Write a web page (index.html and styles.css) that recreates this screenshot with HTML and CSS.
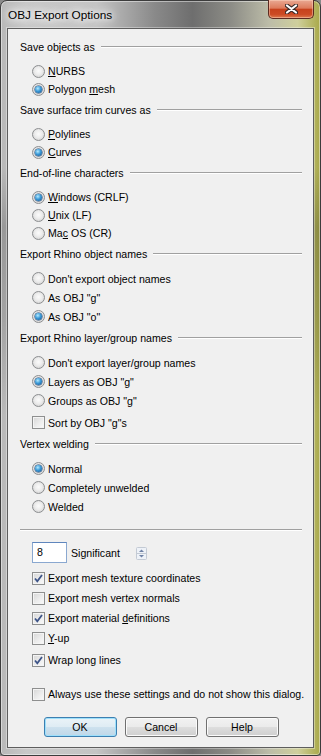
FILE: index.html
```html
<!DOCTYPE html>
<html>
<head>
    <link rel="stylesheet" href="styles.css">
</head>
<body>
    <div class="window">
        <div class="titlebar">
            <div class="title">OBJ Export Options</div>
            <div class="close">
                <svg width="13" height="10" viewBox="0 0 13 10">
                    <path d="M2 1.5 L11 8.5 M11 1.5 L2 8.5" stroke="#3a2a28" stroke-width="4.2" stroke-linecap="round"/>
                    <path d="M2 1.5 L11 8.5 M11 1.5 L2 8.5" stroke="#fff" stroke-width="2.2" stroke-linecap="round"/>
                </svg>
            </div>
        </div>

        <div class="client">
            <div class="group">
                <div class="group-title">Save objects as</div>
                <div class="options">
                    <div class="option"><span class="radio"></span><span><u>N</u>URBS</span></div>
                    <div class="option"><span class="radio on"></span><span>Polygon <u>m</u>esh</span></div>
                </div>
            </div>

            <div class="group">
                <div class="group-title">Save surface trim curves as</div>
                <div class="options">
                    <div class="option"><span class="radio"></span><span><u>P</u>olylines</span></div>
                    <div class="option"><span class="radio on"></span><span><u>C</u>urves</span></div>
                </div>
            </div>

            <div class="group">
                <div class="group-title">End-of-line characters</div>
                <div class="options">
                    <div class="option"><span class="radio on"></span><span><u>W</u>indows (CRLF)</span></div>
                    <div class="option"><span class="radio"></span><span><u>U</u>nix (LF)</span></div>
                    <div class="option"><span class="radio"></span><span>Ma<u>c</u> OS (CR)</span></div>
                </div>
            </div>

            <div class="group">
                <div class="group-title">Export Rhino object names</div>
                <div class="options tall">
                    <div class="option"><span class="radio"></span><span>Don't export object names</span></div>
                    <div class="option"><span class="radio"></span><span>As OBJ &quot;g&quot;</span></div>
                    <div class="option"><span class="radio on"></span><span>As OBJ &quot;o&quot;</span></div>
                </div>
            </div>

            <div class="group">
                <div class="group-title">Export Rhino layer/group names</div>
                <div class="options tall">
                    <div class="option"><span class="radio"></span><span>Don't export layer/group names</span></div>
                    <div class="option"><span class="radio on"></span><span>Layers as OBJ &quot;g&quot;</span></div>
                    <div class="option"><span class="radio"></span><span>Groups as OBJ &quot;g&quot;</span></div>
                    <div class="option sort"><span class="check"></span><span>Sort by OBJ &quot;g&quot;s</span></div>
                </div>
            </div>

            <div class="group">
                <div class="group-title">Vertex welding</div>
                <div class="options tall">
                    <div class="option"><span class="radio on"></span><span>Normal</span></div>
                    <div class="option"><span class="radio"></span><span>Completely unwelded</span></div>
                    <div class="option"><span class="radio"></span><span>Welded</span></div>
                </div>
            </div>

            <div class="separator"></div>

            <div class="number-row">
                <div class="num">8</div>
                <span class="num-label">Significant</span>
                <svg class="spinner" width="11" height="13" viewBox="0 0 11 13">
                    <rect x="0.5" y="0.5" width="10" height="12" rx="1" fill="#eef2f8" stroke="#c3cad4"/>
                    <line x1="1" y1="6.5" x2="10" y2="6.5" stroke="#c3cad4"/>
                    <path d="M3 5 L5.5 2.5 L8 5 Z" fill="#6f82a6"/>
                    <path d="M3 8 L5.5 10.5 L8 8 Z" fill="#6f82a6"/>
                </svg>
            </div>

            <div class="checks">
                <div class="check-row">
                    <span class="check"><svg width="11" height="11" viewBox="0 0 11 11"><path d="M2 5.5 L4.3 8.3 L9 2" fill="none" stroke="#3d5488" stroke-width="1.8"/></svg></span>
                    <span>Export mesh texture coordinates</span>
                </div>
                <div class="check-row">
                    <span class="check"></span>
                    <span>Export mesh vertex normals</span>
                </div>
                <div class="check-row">
                    <span class="check"><svg width="11" height="11" viewBox="0 0 11 11"><path d="M2 5.5 L4.3 8.3 L9 2" fill="none" stroke="#3d5488" stroke-width="1.8"/></svg></span>
                    <span>Export material <u>d</u>efinitions</span>
                </div>
                <div class="check-row">
                    <span class="check"></span>
                    <span><u>Y</u>-up</span>
                </div>
                <div class="check-row wrap">
                    <span class="check"><svg width="11" height="11" viewBox="0 0 11 11"><path d="M2 5.5 L4.3 8.3 L9 2" fill="none" stroke="#3d5488" stroke-width="1.8"/></svg></span>
                    <span>Wrap long lines</span>
                </div>
            </div>

            <div class="check-row always">
                <span class="check"></span>
                <span>Always use these settings and do not show this dialog.</span>
            </div>

            <div class="buttons">
                <button class="btn default">OK</button>
                <button class="btn">Cancel</button>
                <button class="btn">Help</button>
            </div>
        </div>
    </div>
</body>
</html>
```

FILE: styles.css
```css
* {
    box-sizing: border-box;
}

html, body {
    margin: 0;
    padding: 0;
}

body {
    width: 321px;
    height: 756px;
    overflow: hidden;
    background: #8a8a8a;
    font-family: "Liberation Sans", Arial, sans-serif;
    font-size: 10.6px;
    color: #000;
}

.window {
    width: 321px;
    height: 756px;
    display: flex;
    flex-direction: column;
    padding: 0 6px 7px 6px;
    border: 1px solid #3c3c3c;
    border-radius: 7px 7px 4px 4px;
    box-shadow: inset 0 0 0 1px rgba(255, 255, 255, 0.45);
    background:
        linear-gradient(180deg, rgba(0, 0, 0, 0) 0, rgba(0, 0, 0, 0) 22%, rgba(0, 0, 0, 0.18) 30%, rgba(0, 0, 0, 0.12) 42%, rgba(0, 0, 0, 0) 55%),
        linear-gradient(90deg, #b8b8b8 0%, #c8c8c8 8%, #c4c4c4 30%, #8a8a8a 48%, #6e6e6e 60%, #8c8c86 72%, #bcbca8 84%, #cfcf9c 93%, #a9a949 100%);
}

.titlebar {
    height: 27px;
    flex: none;
    display: flex;
    justify-content: space-between;
    align-items: flex-start;
}

.title {
    padding: 7px 0 0 1px;
    font-size: 11.8px;
    color: #000;
    text-shadow: 0 0 6px #fff, 0 0 10px #fff, 0 0 14px #fff;
}

.close {
    width: 46px;
    height: 19px;
    margin-top: -1px;
    display: flex;
    align-items: center;
    justify-content: center;
    border: 1px solid #5c2a20;
    border-top: none;
    border-radius: 0 0 5px 5px;
    background: linear-gradient(180deg, #e9a993 0%, #dd7b5c 45%, #c7421d 52%, #cc4b24 80%, #dc7a4e 100%);
    box-shadow: inset 0 0 0 1px rgba(255, 220, 200, 0.45);
}

.client {
    flex: 1;
    background: #f0f0f0;
    border: 1px solid #5e5e5e;
    box-shadow: 0 0 0 1px rgba(255, 255, 255, 0.35);
    padding: 11px 11px 9px 12px;
}

.group-title {
    height: 14px;
    display: flex;
    align-items: center;
    white-space: nowrap;
}

.group-title::after {
    content: "";
    flex: 1;
    margin-left: 6px;
    border-top: 1px solid #a0a0a0;
    border-bottom: 1px solid #fff;
}

.options {
    padding: 8px 0 5px 12px;
}

.option {
    height: 18px;
    display: flex;
    align-items: center;
    gap: 3px;
    white-space: nowrap;
}

.options.tall .option {
    height: 19px;
}

.option.sort {
    margin-top: 3px;
}

.radio {
    position: relative;
    flex: none;
    width: 13px;
    height: 13px;
    border-radius: 50%;
    border: 1px solid #8c8e90;
    background: radial-gradient(circle at 50% 45%, #fbfbfb 0, #ececec 45%, #c9c9c9 100%);
}

.radio.on::after {
    content: "";
    position: absolute;
    left: 2px;
    top: 2px;
    width: 7px;
    height: 7px;
    border-radius: 50%;
    background: radial-gradient(circle at 40% 35%, #b5ebff 0, #3b9ad8 45%, #0f4a86 100%);
    box-shadow: 0 0 0 0.5px #1a3f6a;
}

.check {
    flex: none;
    width: 13px;
    height: 13px;
    display: flex;
    align-items: center;
    justify-content: center;
    border: 1px solid #8e8f8f;
    background: linear-gradient(135deg, #d6d6d6 0%, #eeeeee 60%, #fafafa 100%);
    box-shadow: inset 0 0 0 1px #f4f4f4;
}

.separator {
    margin-top: 8px;
    border-top: 1px solid #a0a0a0;
    border-bottom: 1px solid #fff;
}

.number-row {
    margin-top: 11px;
    padding-left: 12px;
    height: 21px;
    display: flex;
    align-items: center;
}

.num {
    width: 35px;
    height: 21px;
    padding-left: 4px;
    line-height: 19px;
    background: #fff;
    border: 1px solid #8aa8d0;
    border-top-color: #5f86bd;
}

.num-label {
    margin-left: 4px;
}

.spinner {
    margin-left: 16px;
    margin-top: 1px;
}

.checks {
    margin-top: 5px;
}

.check-row {
    height: 20px;
    padding-left: 12px;
    display: flex;
    align-items: center;
    gap: 3px;
    white-space: nowrap;
}

.check-row.wrap {
    margin-top: 2px;
}

.check-row.always {
    margin-top: 14px;
}

.buttons {
    margin-top: 13px;
    display: flex;
    justify-content: center;
    gap: 8px;
}

.btn {
    width: 73px;
    height: 20px;
    padding: 0;
    font-family: "Liberation Sans", Arial, sans-serif;
    font-size: 10.6px;
    color: #000;
    border: 1px solid #707070;
    border-radius: 3px;
    background: linear-gradient(180deg, #f2f2f2 0%, #ebebeb 48%, #dddddd 52%, #cfcfcf 100%);
    box-shadow: inset 0 0 0 1px #fbfbfb;
}

.btn.default {
    border-color: #3c7fb1;
    background: linear-gradient(180deg, #eaf3f8 0%, #dfecf4 48%, #cde1ee 52%, #bfd7e8 100%);
    box-shadow: inset 0 0 0 1px #9ee0fb;
}
```
